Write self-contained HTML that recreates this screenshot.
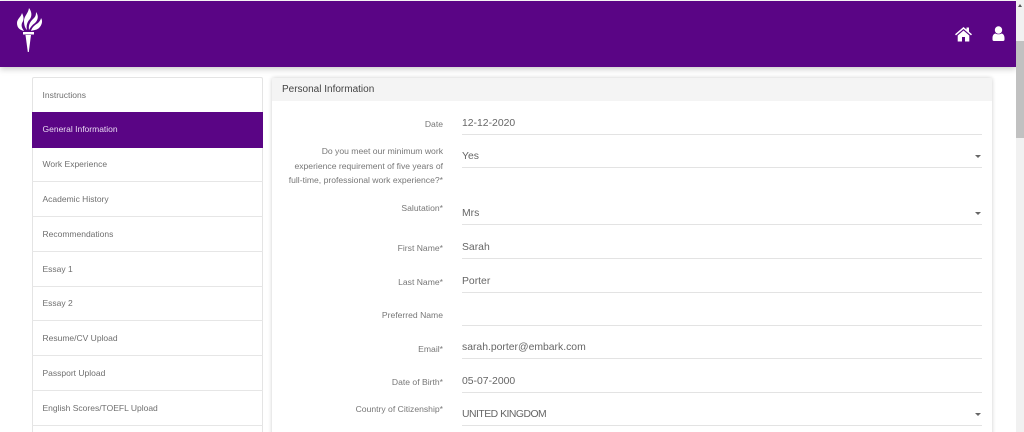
<!DOCTYPE html>
<html><head><meta charset="utf-8"><style>
html,body{margin:0;padding:0;width:1024px;height:432px;overflow:hidden;background:#fff;font-family:"Liberation Sans",sans-serif}
div{position:absolute;box-sizing:border-box;white-space:nowrap}
.wrap{left:0;top:0;width:1024px;height:432px;overflow:hidden;background:#fff}
.hdr{left:0;top:1px;width:1016px;height:66px;background:#5a0585;box-shadow:0 2px 6px rgba(0,0,0,.22)}
.side{left:32px;top:77px;width:231px;height:370px;background:#fff;border:1px solid #e4e4e4;border-radius:2px}
.it{left:32px;width:231px;height:35px;border-bottom:1px solid #e6e6e6;font-size:8.5px;color:#6f6f6f;padding-left:10.5px;line-height:34px}
.act{background:#5a0585;color:#e9daf2;border-bottom:0}
.card{left:272px;top:78px;width:720px;height:370px;background:#fff;box-shadow:0 0 4px rgba(0,0,0,.2);border-radius:2px}
.ch{left:272px;top:78px;width:720px;height:23px;background:#f4f4f4;font-size:10px;color:#444;padding-left:10px;line-height:24px;border-radius:2px 2px 0 0}
.l{right:581px;font-size:8.6px;color:#777;text-align:right;line-height:15px}
.v{left:462px;font-size:10.4px;color:#666;line-height:14px}
.u{left:462px;width:520px;height:1px;background:#e3e3e3}
.a{left:975px;width:0;height:0;border-left:3px solid transparent;border-right:3px solid transparent;border-top:3px solid #666}
</style></head><body>
<div class="wrap">
<div class="hdr"></div>
<svg style="position:absolute;left:15px;top:8px" width="28" height="46" viewBox="0 0 28 46">
<path fill="#fff" d="M2 15C2 11 6 9 7 5C9 9 9 12 7 15C6 18 7 20 9 23C5 22 2 20 2 15Z"/>
<path fill="#fff" d="M9 13C9 8 13 6 14 0C17 4 17 8 15 11C12 14 11 18 12 22C10 20 9 17 9 13Z"/>
<path fill="#fff" d="M14 22C13 16 16 13 19 10C21 8 21 6 21 4C24 8 23 12 20 15C17 17 15 20 14 22Z"/>
<path fill="#fff" d="M16 23C17 19 20 17 23 15C25 13 26 11 26 10C28 13 27 17 24 20C22 22 19 22 16 23Z"/>
<path fill="#fff" d="M8 24H19V26.500H8Z"/>
<path fill="#fff" d="M10.500 27H16L13.800 44H12.800Z"/>
</svg>
<svg style="position:absolute;left:955px;top:26px" width="17" height="16" viewBox="0 0 17 16">
<path fill="#fff" d="M0 8.300L8.500 1L11.500 3.500V1.500H14V5.700L17 8.300L16 9.400L8.500 3L1 9.400Z"/>
<path fill="#fff" d="M2.700 9.500L8.500 4.500L14.300 9.500V15.500H10V11H7V15.500H2.700Z"/>
</svg>
<svg style="position:absolute;left:992px;top:26px" width="13" height="16" viewBox="0 0 13 16">
<circle cx="6.500" cy="4" r="3.700" fill="#fff"/>
<path fill="#fff" d="M0.500 12C0.500 9 2 7.800 3.500 7.500C5 8.500 8 8.500 9.500 7.500C11 7.800 12.500 9 12.500 12V13.500C12.500 14.500 12 15 11 15H2C1 15 0.500 14.500 0.500 13.500Z"/>
</svg>
<div style="left:1016px;top:0;width:8px;height:432px;background:#f1f1f1"></div>
<div style="left:1016px;top:41px;width:8px;height:97px;background:#c1c1c1"></div>
<div style="left:1018px;top:4px;width:0;height:0;border-left:2.500px solid transparent;border-right:2.500px solid transparent;border-bottom:3px solid #555"></div>

<div class="side"></div>
<div class="it" style="top:78px">Instructions</div>
<div class="it act" style="top:112px;height:36px;line-height:34px">General Information</div>
<div class="it" style="top:147px;line-height:34px">Work Experience</div>
<div class="it" style="top:182px">Academic History</div>
<div class="it" style="top:217px">Recommendations</div>
<div class="it" style="top:252px">Essay 1</div>
<div class="it" style="top:286px;line-height:34px">Essay 2</div>
<div class="it" style="top:321px">Resume/CV Upload</div>
<div class="it" style="top:356px">Passport Upload</div>
<div class="it" style="top:391px">English Scores/TOEFL Upload</div>

<div class="card"></div>
<div class="ch">Personal Information</div>

<div class="l" style="top:117px">Date</div>
<div class="v" style="top:117px">12-12-2020</div>
<div class="u" style="top:134px"></div>

<div class="l" style="top:144px">Do you meet our minimum work</div>
<div class="l" style="top:159px">experience requirement of five years of</div>
<div class="l" style="top:173px">full-time, professional work experience?*</div>
<div class="v" style="top:150px">Yes</div>
<div class="a" style="top:155px"></div>
<div class="u" style="top:167px"></div>

<div class="l" style="top:201px">Salutation*</div>
<div class="v" style="top:207px">Mrs</div>
<div class="a" style="top:212px"></div>
<div class="u" style="top:224px"></div>

<div class="l" style="top:241px">First Name*</div>
<div class="v" style="top:241px">Sarah</div>
<div class="u" style="top:258px"></div>

<div class="l" style="top:275px">Last Name*</div>
<div class="v" style="top:275px">Porter</div>
<div class="u" style="top:292px"></div>

<div class="l" style="top:308px">Preferred Name</div>
<div class="u" style="top:325px"></div>

<div class="l" style="top:342px">Email*</div>
<div class="v" style="top:341px">sarah.porter@embark.com</div>
<div class="u" style="top:358px"></div>

<div class="l" style="top:375px">Date of Birth*</div>
<div class="v" style="top:375px">05-07-2000</div>
<div class="u" style="top:392px"></div>

<div class="l" style="top:402px">Country of Citizenship*</div>
<div class="v" style="top:408px;letter-spacing:-.5px">UNITED KINGDOM</div>
<div class="a" style="top:413px"></div>
<div class="u" style="top:425px"></div>
</div>
</body></html>
